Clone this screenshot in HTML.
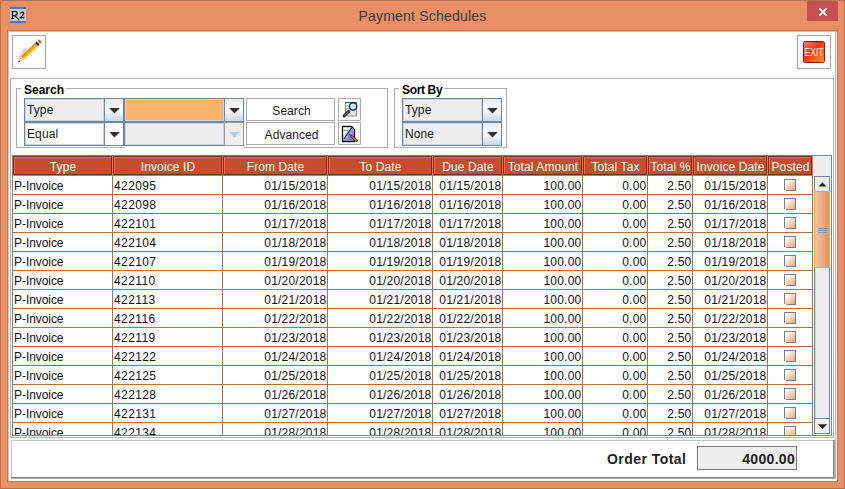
<!DOCTYPE html>
<html><head><meta charset="utf-8"><title>Payment Schedules</title>
<style>
html,body{margin:0;padding:0;}
body{width:845px;height:489px;position:relative;overflow:hidden;background:#e98f66;font-family:"Liberation Sans", sans-serif;}
div{position:absolute;}
svg{display:block;}
.t{white-space:nowrap;}
</style></head><body>
<div style="left:0px;top:0px;width:845px;height:489px;background:#e98f66;"></div><div style="left:0px;top:0px;width:845px;height:1px;background:#b9714f;"></div><div style="left:0px;top:0px;width:1px;height:489px;background:#b9714f;"></div><div style="left:844px;top:0px;width:1px;height:489px;background:#b9714f;"></div><div style="left:0px;top:488px;width:845px;height:1px;background:#b9714f;"></div><svg style="position:absolute;left:10px;top:7px" width="16" height="16" viewBox="0 0 16 16">
<rect x="0" y="0" width="16" height="16" fill="#c9cdd2"/>
<rect x="0" y="0" width="16" height="2" fill="#3b79c9"/>
<rect x="0" y="14" width="16" height="2" fill="#3b79c9"/>
<path d="M2.5 4.5 V11.5 M1.5 4.5 H5.5 Q7.5 4.8 7.3 6.6 Q7 8.4 4.6 8.6 H3 M4.8 8.6 L9.2 13.2" stroke="#151515" stroke-width="1.2" fill="none"/>
<path d="M1.2 11.6 H4" stroke="#151515" stroke-width="1"/>
<path d="M10.3 6.6 Q10.8 4.9 12.4 5 Q14 5.2 13.7 6.8 Q13.3 8.3 10.2 10.6 H14.4" stroke="#151515" stroke-width="1.1" fill="none"/>
</svg><div class="t" style="left:0px;top:8px;width:845px;text-align:center;font-size:14px;line-height:16px;color:#383838;letter-spacing:0.2px;">Payment Schedules</div><div style="left:807px;top:1px;width:31px;height:20px;background:#c75050;"></div><svg style="position:absolute;left:818px;top:7px" width="10" height="10" viewBox="0 0 10 10">
<path d="M1.4 1.3 L8.6 8.7 M8.6 1.3 L1.4 8.7" stroke="#fff" stroke-width="1.9"/></svg><div style="left:7px;top:30px;width:831px;height:452px;background:#c77953;"></div><div style="left:8px;top:31px;width:829px;height:450px;background:#ffffff;"></div><div style="left:8px;top:31px;width:829px;height:1px;background:#b3bec6;"></div><div style="left:8px;top:31px;width:1px;height:450px;background:#c3cbd0;"></div><div style="left:835px;top:31px;width:1px;height:448px;background:#b8b8b8;"></div><div style="left:12px;top:35px;width:34px;height:34px;border:1px solid #a9a9a9;box-sizing:border-box;background:#fff;"></div><svg style="position:absolute;left:13px;top:36px" width="32" height="32" viewBox="0 0 32 32">
<defs><filter id="bl" x="-80%" y="-80%" width="260%" height="260%"><feGaussianBlur stdDeviation="1.5"/></filter></defs>
<path d="M6.5 23.5 L13.5 12.5" stroke="#8c8c8c" stroke-width="3.2" opacity="0.6" filter="url(#bl)"/>
<g transform="translate(5,26.5) rotate(-44)">
<path d="M0 0 L6.5 -2.1 L6.5 2.1 Z" fill="#f3cfae"/>
<path d="M0 0 L2.2 -0.75 L2.2 0.75 Z" fill="#2a2a2a"/>
<rect x="6.5" y="-2.1" width="19.5" height="4.2" fill="#f6a800"/>
<rect x="6.5" y="-2.1" width="19.5" height="1.3" fill="#e88f00"/>
<rect x="6.5" y="0.9" width="19.5" height="1.2" fill="#ffd040"/>
<rect x="26" y="-2.1" width="2" height="4.2" fill="#1e1e1e"/>
<rect x="28" y="-2.1" width="1" height="4.2" fill="#d0d0d0"/>
<rect x="29" y="-2.1" width="2.4" height="4.2" rx="1" fill="#ff5a20"/>
</g></svg><div style="left:797px;top:35px;width:34px;height:34px;border:1px solid #a9a9a9;box-sizing:border-box;background:#fff;"></div><svg style="position:absolute;left:803px;top:41px" width="22" height="22" viewBox="0 0 22 22">
<defs><linearGradient id="eg" x1="0" y1="0" x2="1" y2="1">
<stop offset="0" stop-color="#e87a7a"/><stop offset="0.45" stop-color="#f03a10"/><stop offset="1" stop-color="#ff9a2a"/></linearGradient></defs>
<path d="M1.5 0.5 H20.5 L21.5 1.5 V20.5 L20.5 21.5 H1.5 L0.5 20.5 V1.5 Z" fill="url(#eg)" stroke="#a50f0f" stroke-width="1"/>
<text x="11" y="15" text-anchor="middle" font-family="Liberation Sans" font-size="10" fill="#fff" textLength="19.2" lengthAdjust="spacingAndGlyphs">EXIT</text>
</svg><div style="left:10px;top:78px;width:824px;height:360px;border:1px solid #b4b4b4;box-sizing:border-box;"></div><div style="left:16px;top:88px;width:372px;height:60px;border:1px solid #acacac;box-sizing:border-box;"></div><div style="left:21px;top:86px;width:45px;height:5px;background:#fff;"></div><div class="t" style="left:24px;top:83px;text-align:left;font-size:12px;line-height:14px;font-weight:bold;color:#000;letter-spacing:0px;">Search</div><div style="left:394px;top:88px;width:113px;height:60px;border:1px solid #acacac;box-sizing:border-box;"></div><div style="left:399px;top:86px;width:45px;height:5px;background:#fff;"></div><div class="t" style="left:402px;top:83px;text-align:left;font-size:12px;line-height:14px;font-weight:bold;color:#000;letter-spacing:-0.35px;">Sort By</div><div style="left:124px;top:147px;width:120px;height:1px;background:#fff;"></div><div style="left:24px;top:98px;width:100px;height:24px;background:#72879a;"></div><div style="left:25px;top:99px;width:79px;height:22px;background:#c4d7ea;"></div><div style="left:26px;top:100px;width:77px;height:20px;background:#eeeeee;"></div><div style="left:105px;top:99px;width:18px;height:22px;background:linear-gradient(#e2ebf5,#ffffff 42%,#c9daed);"></div><svg style="position:absolute;left:109px;top:108px" width="11" height="6" viewBox="0 0 11 6"><path d="M0.2 0 H10.8 L5.5 5.6 Z" fill="#333"/></svg><div class="t" style="left:27px;top:102px;text-align:left;font-size:12px;line-height:16px;color:#1a1a1a;letter-spacing:0.1px;">Type</div><div style="left:124px;top:98px;width:120px;height:24px;background:#72879a;"></div><div style="left:125px;top:99px;width:99px;height:22px;background:#c4d7ea;"></div><div style="left:126px;top:100px;width:97px;height:20px;background:#fcb36b;"></div><div style="left:225px;top:99px;width:18px;height:22px;background:linear-gradient(#e2ebf5,#ffffff 42%,#c9daed);"></div><svg style="position:absolute;left:229px;top:108px" width="11" height="6" viewBox="0 0 11 6"><path d="M0.2 0 H10.8 L5.5 5.6 Z" fill="#333"/></svg><div style="left:24px;top:122px;width:100px;height:24px;background:#72879a;"></div><div style="left:25px;top:123px;width:79px;height:22px;background:#c4d7ea;"></div><div style="left:26px;top:124px;width:77px;height:20px;background:#ffffff;"></div><div style="left:105px;top:123px;width:18px;height:22px;background:#ffffff;"></div><svg style="position:absolute;left:109px;top:132px" width="11" height="6" viewBox="0 0 11 6"><path d="M0.2 0 H10.8 L5.5 5.6 Z" fill="#333"/></svg><div class="t" style="left:27px;top:126px;text-align:left;font-size:12px;line-height:16px;color:#1a1a1a;letter-spacing:0.1px;">Equal</div><div style="left:124px;top:122px;width:120px;height:24px;background:#72879a;"></div><div style="left:125px;top:123px;width:99px;height:22px;background:#c4d7ea;"></div><div style="left:126px;top:124px;width:97px;height:20px;background:#eeeeee;"></div><div style="left:224px;top:122px;width:20px;height:24px;background:#9c9c9c;"></div><div style="left:225px;top:123px;width:18px;height:22px;background:#eeeeee;"></div><svg style="position:absolute;left:229px;top:132px" width="11" height="6" viewBox="0 0 11 6"><path d="M0.2 0 H10.8 L5.5 5.6 Z" fill="#b5cbe3"/></svg><div style="left:402px;top:98px;width:100px;height:24px;background:#72879a;"></div><div style="left:403px;top:99px;width:79px;height:22px;background:#c4d7ea;"></div><div style="left:404px;top:100px;width:77px;height:20px;background:#eeeeee;"></div><div style="left:483px;top:99px;width:18px;height:22px;background:linear-gradient(#e2ebf5,#ffffff 42%,#c9daed);"></div><svg style="position:absolute;left:487px;top:108px" width="11" height="6" viewBox="0 0 11 6"><path d="M0.2 0 H10.8 L5.5 5.6 Z" fill="#333"/></svg><div class="t" style="left:405px;top:102px;text-align:left;font-size:12px;line-height:16px;color:#1a1a1a;letter-spacing:0.1px;">Type</div><div style="left:402px;top:122px;width:100px;height:24px;background:#72879a;"></div><div style="left:403px;top:123px;width:79px;height:22px;background:#c4d7ea;"></div><div style="left:404px;top:124px;width:77px;height:20px;background:#eeeeee;"></div><div style="left:483px;top:123px;width:18px;height:22px;background:linear-gradient(#e2ebf5,#ffffff 42%,#c9daed);"></div><svg style="position:absolute;left:487px;top:132px" width="11" height="6" viewBox="0 0 11 6"><path d="M0.2 0 H10.8 L5.5 5.6 Z" fill="#333"/></svg><div class="t" style="left:405px;top:126px;text-align:left;font-size:12px;line-height:16px;color:#1a1a1a;letter-spacing:0.1px;">None</div><div style="left:246px;top:98px;width:89px;height:23px;border:1px solid #ababab;box-sizing:border-box;background:#fff;"></div><div class="t" style="left:247px;top:103px;width:89px;text-align:center;font-size:12px;line-height:16px;color:#1a1a1a;letter-spacing:0.05px;">Search</div><div style="left:246px;top:122px;width:89px;height:23px;border:1px solid #ababab;box-sizing:border-box;background:#fff;"></div><div class="t" style="left:247px;top:127px;width:89px;text-align:center;font-size:12px;line-height:16px;color:#1a1a1a;letter-spacing:0.05px;">Advanced</div><div style="left:338px;top:98px;width:23px;height:23px;border:1px solid #ababab;box-sizing:border-box;background:#fff;"></div><div style="left:338px;top:122px;width:23px;height:23px;border:1px solid #ababab;box-sizing:border-box;background:#fff;"></div><svg style="position:absolute;left:339px;top:99px" width="21" height="21" viewBox="0 0 21 21">
<rect x="6.5" y="3.5" width="11" height="13.5" fill="#e4e4e4" stroke="#8c8c8c" stroke-width="1"/>
<rect x="6" y="3" width="12" height="1.2" fill="#555"/>
<rect x="7" y="4.2" width="3.5" height="9" fill="#fafafa"/>
<rect x="7.5" y="6" width="2" height="1" fill="#999"/><rect x="7.5" y="9" width="2" height="1" fill="#999"/>
<path d="M5 17 L9.6 12.4" stroke="#2a2a2a" stroke-width="3" stroke-linecap="round"/>
<path d="M5.6 16.2 L9.2 12.6" stroke="#9a9a9a" stroke-width="0.8" stroke-linecap="round"/>
<circle cx="14.05" cy="7.5" r="3.7" fill="#c4f6fa" stroke="#262626" stroke-width="1.4"/>
</svg><svg style="position:absolute;left:339px;top:123px" width="21" height="21" viewBox="0 0 21 21">
<defs><linearGradient id="ag" x1="0" y1="0" x2="0.7" y2="1"><stop offset="0.35" stop-color="#ffffff"/><stop offset="1" stop-color="#5c5cf2"/></linearGradient></defs>
<path d="M3.5 3.5 H12.5 L15.5 6.5 V18.5 H3.5 Z" fill="url(#ag)" stroke="#111" stroke-width="1.3"/>
<path d="M12 4.2 L15 7 V18 L10 18 L8 15 Z" fill="#8282f2" opacity="0.75"/>
<path d="M4.5 7 Q7 7.6 9.5 8" stroke="#a0a0f6" stroke-width="1.3" fill="none"/>
<path d="M5 16 L12.6 4.6" stroke="#111" stroke-width="1.1"/>
<path d="M9.5 11 L12.5 13.5" stroke="#111" stroke-width="1"/>
<path d="M12.3 13.3 L17.6 17.6" stroke="#3a2010" stroke-width="2.6" stroke-linecap="round"/>
<path d="M12.5 13.3 L17.4 17.4" stroke="#d9773a" stroke-width="1.3" stroke-linecap="round"/>
</svg><div style="left:12px;top:155px;width:820px;height:281px;background:#72879a;"></div><div style="left:13px;top:156px;width:818px;height:279px;background:#ffffff;"></div><div style="left:813px;top:156px;width:18px;height:20px;background:#eeeeee;"></div><div style="left:13px;top:156px;width:100px;height:20px;background:#ff6b3c;"></div><div style="left:13px;top:156px;width:99px;height:19px;background:#7e2e17;"></div><div style="left:14px;top:157px;width:98px;height:18px;background:#7e2e17;"></div><div style="left:14px;top:157px;width:97px;height:17px;background:#ff6b3c;"></div><div style="left:15px;top:158px;width:96px;height:16px;background:#c54e2d;"></div><div class="t" style="left:13px;top:159px;width:100px;text-align:center;font-size:12px;line-height:16px;color:#fff;letter-spacing:0.1px;">Type</div><div style="left:113px;top:156px;width:110px;height:20px;background:#ff6b3c;"></div><div style="left:113px;top:156px;width:109px;height:19px;background:#7e2e17;"></div><div style="left:114px;top:157px;width:108px;height:18px;background:#7e2e17;"></div><div style="left:114px;top:157px;width:107px;height:17px;background:#ff6b3c;"></div><div style="left:115px;top:158px;width:106px;height:16px;background:#c54e2d;"></div><div class="t" style="left:113px;top:159px;width:110px;text-align:center;font-size:12px;line-height:16px;color:#fff;letter-spacing:0.1px;">Invoice ID</div><div style="left:223px;top:156px;width:105px;height:20px;background:#ff6b3c;"></div><div style="left:223px;top:156px;width:104px;height:19px;background:#7e2e17;"></div><div style="left:224px;top:157px;width:103px;height:18px;background:#7e2e17;"></div><div style="left:224px;top:157px;width:102px;height:17px;background:#ff6b3c;"></div><div style="left:225px;top:158px;width:101px;height:16px;background:#c54e2d;"></div><div class="t" style="left:223px;top:159px;width:105px;text-align:center;font-size:12px;line-height:16px;color:#fff;letter-spacing:0.1px;">From Date</div><div style="left:328px;top:156px;width:105px;height:20px;background:#ff6b3c;"></div><div style="left:328px;top:156px;width:104px;height:19px;background:#7e2e17;"></div><div style="left:329px;top:157px;width:103px;height:18px;background:#7e2e17;"></div><div style="left:329px;top:157px;width:102px;height:17px;background:#ff6b3c;"></div><div style="left:330px;top:158px;width:101px;height:16px;background:#c54e2d;"></div><div class="t" style="left:328px;top:159px;width:105px;text-align:center;font-size:12px;line-height:16px;color:#fff;letter-spacing:0.1px;">To Date</div><div style="left:433px;top:156px;width:70px;height:20px;background:#ff6b3c;"></div><div style="left:433px;top:156px;width:69px;height:19px;background:#7e2e17;"></div><div style="left:434px;top:157px;width:68px;height:18px;background:#7e2e17;"></div><div style="left:434px;top:157px;width:67px;height:17px;background:#ff6b3c;"></div><div style="left:435px;top:158px;width:66px;height:16px;background:#c54e2d;"></div><div class="t" style="left:433px;top:159px;width:70px;text-align:center;font-size:12px;line-height:16px;color:#fff;letter-spacing:0.1px;">Due Date</div><div style="left:503px;top:156px;width:80px;height:20px;background:#ff6b3c;"></div><div style="left:503px;top:156px;width:79px;height:19px;background:#7e2e17;"></div><div style="left:504px;top:157px;width:78px;height:18px;background:#7e2e17;"></div><div style="left:504px;top:157px;width:77px;height:17px;background:#ff6b3c;"></div><div style="left:505px;top:158px;width:76px;height:16px;background:#c54e2d;"></div><div class="t" style="left:503px;top:159px;width:80px;text-align:center;font-size:12px;line-height:16px;color:#fff;letter-spacing:0.1px;">Total Amount</div><div style="left:583px;top:156px;width:65px;height:20px;background:#ff6b3c;"></div><div style="left:583px;top:156px;width:64px;height:19px;background:#7e2e17;"></div><div style="left:584px;top:157px;width:63px;height:18px;background:#7e2e17;"></div><div style="left:584px;top:157px;width:62px;height:17px;background:#ff6b3c;"></div><div style="left:585px;top:158px;width:61px;height:16px;background:#c54e2d;"></div><div class="t" style="left:583px;top:159px;width:65px;text-align:center;font-size:12px;line-height:16px;color:#fff;letter-spacing:0.1px;">Total Tax</div><div style="left:648px;top:156px;width:45px;height:20px;background:#ff6b3c;"></div><div style="left:648px;top:156px;width:44px;height:19px;background:#7e2e17;"></div><div style="left:649px;top:157px;width:43px;height:18px;background:#7e2e17;"></div><div style="left:649px;top:157px;width:42px;height:17px;background:#ff6b3c;"></div><div style="left:650px;top:158px;width:41px;height:16px;background:#c54e2d;"></div><div class="t" style="left:648px;top:159px;width:45px;text-align:center;font-size:12px;line-height:16px;color:#fff;letter-spacing:0.1px;">Total %</div><div style="left:693px;top:156px;width:75px;height:20px;background:#ff6b3c;"></div><div style="left:693px;top:156px;width:74px;height:19px;background:#7e2e17;"></div><div style="left:694px;top:157px;width:73px;height:18px;background:#7e2e17;"></div><div style="left:694px;top:157px;width:72px;height:17px;background:#ff6b3c;"></div><div style="left:695px;top:158px;width:71px;height:16px;background:#c54e2d;"></div><div class="t" style="left:693px;top:159px;width:75px;text-align:center;font-size:12px;line-height:16px;color:#fff;letter-spacing:0.1px;">Invoice Date</div><div style="left:768px;top:156px;width:45px;height:20px;background:#ff6b3c;"></div><div style="left:768px;top:156px;width:44px;height:19px;background:#7e2e17;"></div><div style="left:769px;top:157px;width:43px;height:18px;background:#7e2e17;"></div><div style="left:769px;top:157px;width:42px;height:17px;background:#ff6b3c;"></div><div style="left:770px;top:158px;width:41px;height:16px;background:#c54e2d;"></div><div class="t" style="left:768px;top:159px;width:45px;text-align:center;font-size:12px;line-height:16px;color:#fff;letter-spacing:0.1px;">Posted</div><div style="left:13px;top:176px;width:800px;height:259px;overflow:hidden;"><div style="left:99px;top:0px;width:1px;height:19px;background:#b8703a;"></div><div class="t" style="left:1px;top:2px;width:98px;font-size:12px;line-height:16px;color:#111;letter-spacing:-0.06px;">P-Invoice</div><div style="left:209px;top:0px;width:1px;height:19px;background:#b8703a;"></div><div class="t" style="left:101px;top:2px;width:108px;font-size:12px;line-height:16px;color:#111;letter-spacing:0.4px;">422095</div><div style="left:314px;top:0px;width:1px;height:19px;background:#b8703a;"></div><div class="t" style="left:210px;top:2px;width:103.4px;text-align:right;font-size:12px;line-height:16px;color:#111;letter-spacing:0.2px;">01/15/2018</div><div style="left:419px;top:0px;width:1px;height:19px;background:#b8703a;"></div><div class="t" style="left:315px;top:2px;width:103.4px;text-align:right;font-size:12px;line-height:16px;color:#111;letter-spacing:0.2px;">01/15/2018</div><div style="left:489px;top:0px;width:1px;height:19px;background:#b8703a;"></div><div class="t" style="left:420px;top:2px;width:68.4px;text-align:right;font-size:12px;line-height:16px;color:#111;letter-spacing:0.2px;">01/15/2018</div><div style="left:569px;top:0px;width:1px;height:19px;background:#b8703a;"></div><div class="t" style="left:490px;top:2px;width:78.4px;text-align:right;font-size:12px;line-height:16px;color:#111;letter-spacing:0.2px;">100.00</div><div style="left:634px;top:0px;width:1px;height:19px;background:#b8703a;"></div><div class="t" style="left:570px;top:2px;width:63.4px;text-align:right;font-size:12px;line-height:16px;color:#111;letter-spacing:0.2px;">0.00</div><div style="left:679px;top:0px;width:1px;height:19px;background:#b8703a;"></div><div class="t" style="left:635px;top:2px;width:43.4px;text-align:right;font-size:12px;line-height:16px;color:#111;letter-spacing:0.2px;">2.50</div><div style="left:754px;top:0px;width:1px;height:19px;background:#b8703a;"></div><div class="t" style="left:680px;top:2px;width:73.4px;text-align:right;font-size:12px;line-height:16px;color:#111;letter-spacing:0.2px;">01/15/2018</div><div style="left:799px;top:0px;width:1px;height:19px;background:#b8703a;"></div><div style="left:771px;top:3px;width:12px;height:12px;"><svg width="12" height="12" viewBox="0 0 12 12" shape-rendering="crispEdges"><defs><linearGradient id="cg0" x1="0" y1="0" x2="1" y2="1"><stop offset="0.15" stop-color="#ffffff"/><stop offset="0.95" stop-color="#f0a672"/></linearGradient></defs><rect x="1" y="1" width="10" height="10" fill="url(#cg0)"/><rect x="0" y="0" width="12" height="1" fill="#6f8296"/><rect x="0" y="0" width="1" height="11" fill="#6f8296"/><rect x="11" y="1" width="1" height="11" fill="#6f8296"/><rect x="2" y="11" width="10" height="1" fill="#6f8296"/></svg></div><div style="left:0px;top:18px;width:800px;height:1px;background:#b8703a;"></div><div style="left:99px;top:19px;width:1px;height:19px;background:#b8703a;"></div><div class="t" style="left:1px;top:21px;width:98px;font-size:12px;line-height:16px;color:#111;letter-spacing:-0.06px;">P-Invoice</div><div style="left:209px;top:19px;width:1px;height:19px;background:#b8703a;"></div><div class="t" style="left:101px;top:21px;width:108px;font-size:12px;line-height:16px;color:#111;letter-spacing:0.4px;">422098</div><div style="left:314px;top:19px;width:1px;height:19px;background:#b8703a;"></div><div class="t" style="left:210px;top:21px;width:103.4px;text-align:right;font-size:12px;line-height:16px;color:#111;letter-spacing:0.2px;">01/16/2018</div><div style="left:419px;top:19px;width:1px;height:19px;background:#b8703a;"></div><div class="t" style="left:315px;top:21px;width:103.4px;text-align:right;font-size:12px;line-height:16px;color:#111;letter-spacing:0.2px;">01/16/2018</div><div style="left:489px;top:19px;width:1px;height:19px;background:#b8703a;"></div><div class="t" style="left:420px;top:21px;width:68.4px;text-align:right;font-size:12px;line-height:16px;color:#111;letter-spacing:0.2px;">01/16/2018</div><div style="left:569px;top:19px;width:1px;height:19px;background:#b8703a;"></div><div class="t" style="left:490px;top:21px;width:78.4px;text-align:right;font-size:12px;line-height:16px;color:#111;letter-spacing:0.2px;">100.00</div><div style="left:634px;top:19px;width:1px;height:19px;background:#b8703a;"></div><div class="t" style="left:570px;top:21px;width:63.4px;text-align:right;font-size:12px;line-height:16px;color:#111;letter-spacing:0.2px;">0.00</div><div style="left:679px;top:19px;width:1px;height:19px;background:#b8703a;"></div><div class="t" style="left:635px;top:21px;width:43.4px;text-align:right;font-size:12px;line-height:16px;color:#111;letter-spacing:0.2px;">2.50</div><div style="left:754px;top:19px;width:1px;height:19px;background:#b8703a;"></div><div class="t" style="left:680px;top:21px;width:73.4px;text-align:right;font-size:12px;line-height:16px;color:#111;letter-spacing:0.2px;">01/16/2018</div><div style="left:799px;top:19px;width:1px;height:19px;background:#b8703a;"></div><div style="left:771px;top:22px;width:12px;height:12px;"><svg width="12" height="12" viewBox="0 0 12 12" shape-rendering="crispEdges"><defs><linearGradient id="cg1" x1="0" y1="0" x2="1" y2="1"><stop offset="0.15" stop-color="#ffffff"/><stop offset="0.95" stop-color="#f0a672"/></linearGradient></defs><rect x="1" y="1" width="10" height="10" fill="url(#cg1)"/><rect x="0" y="0" width="12" height="1" fill="#6f8296"/><rect x="0" y="0" width="1" height="11" fill="#6f8296"/><rect x="11" y="1" width="1" height="11" fill="#6f8296"/><rect x="2" y="11" width="10" height="1" fill="#6f8296"/></svg></div><div style="left:0px;top:37px;width:800px;height:1px;background:#b8703a;"></div><div style="left:99px;top:38px;width:1px;height:19px;background:#b8703a;"></div><div class="t" style="left:1px;top:40px;width:98px;font-size:12px;line-height:16px;color:#111;letter-spacing:-0.06px;">P-Invoice</div><div style="left:209px;top:38px;width:1px;height:19px;background:#b8703a;"></div><div class="t" style="left:101px;top:40px;width:108px;font-size:12px;line-height:16px;color:#111;letter-spacing:0.4px;">422101</div><div style="left:314px;top:38px;width:1px;height:19px;background:#b8703a;"></div><div class="t" style="left:210px;top:40px;width:103.4px;text-align:right;font-size:12px;line-height:16px;color:#111;letter-spacing:0.2px;">01/17/2018</div><div style="left:419px;top:38px;width:1px;height:19px;background:#b8703a;"></div><div class="t" style="left:315px;top:40px;width:103.4px;text-align:right;font-size:12px;line-height:16px;color:#111;letter-spacing:0.2px;">01/17/2018</div><div style="left:489px;top:38px;width:1px;height:19px;background:#b8703a;"></div><div class="t" style="left:420px;top:40px;width:68.4px;text-align:right;font-size:12px;line-height:16px;color:#111;letter-spacing:0.2px;">01/17/2018</div><div style="left:569px;top:38px;width:1px;height:19px;background:#b8703a;"></div><div class="t" style="left:490px;top:40px;width:78.4px;text-align:right;font-size:12px;line-height:16px;color:#111;letter-spacing:0.2px;">100.00</div><div style="left:634px;top:38px;width:1px;height:19px;background:#b8703a;"></div><div class="t" style="left:570px;top:40px;width:63.4px;text-align:right;font-size:12px;line-height:16px;color:#111;letter-spacing:0.2px;">0.00</div><div style="left:679px;top:38px;width:1px;height:19px;background:#b8703a;"></div><div class="t" style="left:635px;top:40px;width:43.4px;text-align:right;font-size:12px;line-height:16px;color:#111;letter-spacing:0.2px;">2.50</div><div style="left:754px;top:38px;width:1px;height:19px;background:#b8703a;"></div><div class="t" style="left:680px;top:40px;width:73.4px;text-align:right;font-size:12px;line-height:16px;color:#111;letter-spacing:0.2px;">01/17/2018</div><div style="left:799px;top:38px;width:1px;height:19px;background:#b8703a;"></div><div style="left:771px;top:41px;width:12px;height:12px;"><svg width="12" height="12" viewBox="0 0 12 12" shape-rendering="crispEdges"><defs><linearGradient id="cg2" x1="0" y1="0" x2="1" y2="1"><stop offset="0.15" stop-color="#ffffff"/><stop offset="0.95" stop-color="#f0a672"/></linearGradient></defs><rect x="1" y="1" width="10" height="10" fill="url(#cg2)"/><rect x="0" y="0" width="12" height="1" fill="#6f8296"/><rect x="0" y="0" width="1" height="11" fill="#6f8296"/><rect x="11" y="1" width="1" height="11" fill="#6f8296"/><rect x="2" y="11" width="10" height="1" fill="#6f8296"/></svg></div><div style="left:0px;top:56px;width:800px;height:1px;background:#b8703a;"></div><div style="left:99px;top:57px;width:1px;height:19px;background:#b8703a;"></div><div class="t" style="left:1px;top:59px;width:98px;font-size:12px;line-height:16px;color:#111;letter-spacing:-0.06px;">P-Invoice</div><div style="left:209px;top:57px;width:1px;height:19px;background:#b8703a;"></div><div class="t" style="left:101px;top:59px;width:108px;font-size:12px;line-height:16px;color:#111;letter-spacing:0.4px;">422104</div><div style="left:314px;top:57px;width:1px;height:19px;background:#b8703a;"></div><div class="t" style="left:210px;top:59px;width:103.4px;text-align:right;font-size:12px;line-height:16px;color:#111;letter-spacing:0.2px;">01/18/2018</div><div style="left:419px;top:57px;width:1px;height:19px;background:#b8703a;"></div><div class="t" style="left:315px;top:59px;width:103.4px;text-align:right;font-size:12px;line-height:16px;color:#111;letter-spacing:0.2px;">01/18/2018</div><div style="left:489px;top:57px;width:1px;height:19px;background:#b8703a;"></div><div class="t" style="left:420px;top:59px;width:68.4px;text-align:right;font-size:12px;line-height:16px;color:#111;letter-spacing:0.2px;">01/18/2018</div><div style="left:569px;top:57px;width:1px;height:19px;background:#b8703a;"></div><div class="t" style="left:490px;top:59px;width:78.4px;text-align:right;font-size:12px;line-height:16px;color:#111;letter-spacing:0.2px;">100.00</div><div style="left:634px;top:57px;width:1px;height:19px;background:#b8703a;"></div><div class="t" style="left:570px;top:59px;width:63.4px;text-align:right;font-size:12px;line-height:16px;color:#111;letter-spacing:0.2px;">0.00</div><div style="left:679px;top:57px;width:1px;height:19px;background:#b8703a;"></div><div class="t" style="left:635px;top:59px;width:43.4px;text-align:right;font-size:12px;line-height:16px;color:#111;letter-spacing:0.2px;">2.50</div><div style="left:754px;top:57px;width:1px;height:19px;background:#b8703a;"></div><div class="t" style="left:680px;top:59px;width:73.4px;text-align:right;font-size:12px;line-height:16px;color:#111;letter-spacing:0.2px;">01/18/2018</div><div style="left:799px;top:57px;width:1px;height:19px;background:#b8703a;"></div><div style="left:771px;top:60px;width:12px;height:12px;"><svg width="12" height="12" viewBox="0 0 12 12" shape-rendering="crispEdges"><defs><linearGradient id="cg3" x1="0" y1="0" x2="1" y2="1"><stop offset="0.15" stop-color="#ffffff"/><stop offset="0.95" stop-color="#f0a672"/></linearGradient></defs><rect x="1" y="1" width="10" height="10" fill="url(#cg3)"/><rect x="0" y="0" width="12" height="1" fill="#6f8296"/><rect x="0" y="0" width="1" height="11" fill="#6f8296"/><rect x="11" y="1" width="1" height="11" fill="#6f8296"/><rect x="2" y="11" width="10" height="1" fill="#6f8296"/></svg></div><div style="left:0px;top:75px;width:800px;height:1px;background:#b8703a;"></div><div style="left:99px;top:76px;width:1px;height:19px;background:#b8703a;"></div><div class="t" style="left:1px;top:78px;width:98px;font-size:12px;line-height:16px;color:#111;letter-spacing:-0.06px;">P-Invoice</div><div style="left:209px;top:76px;width:1px;height:19px;background:#b8703a;"></div><div class="t" style="left:101px;top:78px;width:108px;font-size:12px;line-height:16px;color:#111;letter-spacing:0.4px;">422107</div><div style="left:314px;top:76px;width:1px;height:19px;background:#b8703a;"></div><div class="t" style="left:210px;top:78px;width:103.4px;text-align:right;font-size:12px;line-height:16px;color:#111;letter-spacing:0.2px;">01/19/2018</div><div style="left:419px;top:76px;width:1px;height:19px;background:#b8703a;"></div><div class="t" style="left:315px;top:78px;width:103.4px;text-align:right;font-size:12px;line-height:16px;color:#111;letter-spacing:0.2px;">01/19/2018</div><div style="left:489px;top:76px;width:1px;height:19px;background:#b8703a;"></div><div class="t" style="left:420px;top:78px;width:68.4px;text-align:right;font-size:12px;line-height:16px;color:#111;letter-spacing:0.2px;">01/19/2018</div><div style="left:569px;top:76px;width:1px;height:19px;background:#b8703a;"></div><div class="t" style="left:490px;top:78px;width:78.4px;text-align:right;font-size:12px;line-height:16px;color:#111;letter-spacing:0.2px;">100.00</div><div style="left:634px;top:76px;width:1px;height:19px;background:#b8703a;"></div><div class="t" style="left:570px;top:78px;width:63.4px;text-align:right;font-size:12px;line-height:16px;color:#111;letter-spacing:0.2px;">0.00</div><div style="left:679px;top:76px;width:1px;height:19px;background:#b8703a;"></div><div class="t" style="left:635px;top:78px;width:43.4px;text-align:right;font-size:12px;line-height:16px;color:#111;letter-spacing:0.2px;">2.50</div><div style="left:754px;top:76px;width:1px;height:19px;background:#b8703a;"></div><div class="t" style="left:680px;top:78px;width:73.4px;text-align:right;font-size:12px;line-height:16px;color:#111;letter-spacing:0.2px;">01/19/2018</div><div style="left:799px;top:76px;width:1px;height:19px;background:#b8703a;"></div><div style="left:771px;top:79px;width:12px;height:12px;"><svg width="12" height="12" viewBox="0 0 12 12" shape-rendering="crispEdges"><defs><linearGradient id="cg4" x1="0" y1="0" x2="1" y2="1"><stop offset="0.15" stop-color="#ffffff"/><stop offset="0.95" stop-color="#f0a672"/></linearGradient></defs><rect x="1" y="1" width="10" height="10" fill="url(#cg4)"/><rect x="0" y="0" width="12" height="1" fill="#6f8296"/><rect x="0" y="0" width="1" height="11" fill="#6f8296"/><rect x="11" y="1" width="1" height="11" fill="#6f8296"/><rect x="2" y="11" width="10" height="1" fill="#6f8296"/></svg></div><div style="left:0px;top:94px;width:800px;height:1px;background:#b8703a;"></div><div style="left:99px;top:95px;width:1px;height:19px;background:#b8703a;"></div><div class="t" style="left:1px;top:97px;width:98px;font-size:12px;line-height:16px;color:#111;letter-spacing:-0.06px;">P-Invoice</div><div style="left:209px;top:95px;width:1px;height:19px;background:#b8703a;"></div><div class="t" style="left:101px;top:97px;width:108px;font-size:12px;line-height:16px;color:#111;letter-spacing:0.4px;">422110</div><div style="left:314px;top:95px;width:1px;height:19px;background:#b8703a;"></div><div class="t" style="left:210px;top:97px;width:103.4px;text-align:right;font-size:12px;line-height:16px;color:#111;letter-spacing:0.2px;">01/20/2018</div><div style="left:419px;top:95px;width:1px;height:19px;background:#b8703a;"></div><div class="t" style="left:315px;top:97px;width:103.4px;text-align:right;font-size:12px;line-height:16px;color:#111;letter-spacing:0.2px;">01/20/2018</div><div style="left:489px;top:95px;width:1px;height:19px;background:#b8703a;"></div><div class="t" style="left:420px;top:97px;width:68.4px;text-align:right;font-size:12px;line-height:16px;color:#111;letter-spacing:0.2px;">01/20/2018</div><div style="left:569px;top:95px;width:1px;height:19px;background:#b8703a;"></div><div class="t" style="left:490px;top:97px;width:78.4px;text-align:right;font-size:12px;line-height:16px;color:#111;letter-spacing:0.2px;">100.00</div><div style="left:634px;top:95px;width:1px;height:19px;background:#b8703a;"></div><div class="t" style="left:570px;top:97px;width:63.4px;text-align:right;font-size:12px;line-height:16px;color:#111;letter-spacing:0.2px;">0.00</div><div style="left:679px;top:95px;width:1px;height:19px;background:#b8703a;"></div><div class="t" style="left:635px;top:97px;width:43.4px;text-align:right;font-size:12px;line-height:16px;color:#111;letter-spacing:0.2px;">2.50</div><div style="left:754px;top:95px;width:1px;height:19px;background:#b8703a;"></div><div class="t" style="left:680px;top:97px;width:73.4px;text-align:right;font-size:12px;line-height:16px;color:#111;letter-spacing:0.2px;">01/20/2018</div><div style="left:799px;top:95px;width:1px;height:19px;background:#b8703a;"></div><div style="left:771px;top:98px;width:12px;height:12px;"><svg width="12" height="12" viewBox="0 0 12 12" shape-rendering="crispEdges"><defs><linearGradient id="cg5" x1="0" y1="0" x2="1" y2="1"><stop offset="0.15" stop-color="#ffffff"/><stop offset="0.95" stop-color="#f0a672"/></linearGradient></defs><rect x="1" y="1" width="10" height="10" fill="url(#cg5)"/><rect x="0" y="0" width="12" height="1" fill="#6f8296"/><rect x="0" y="0" width="1" height="11" fill="#6f8296"/><rect x="11" y="1" width="1" height="11" fill="#6f8296"/><rect x="2" y="11" width="10" height="1" fill="#6f8296"/></svg></div><div style="left:0px;top:113px;width:800px;height:1px;background:#b8703a;"></div><div style="left:99px;top:114px;width:1px;height:19px;background:#b8703a;"></div><div class="t" style="left:1px;top:116px;width:98px;font-size:12px;line-height:16px;color:#111;letter-spacing:-0.06px;">P-Invoice</div><div style="left:209px;top:114px;width:1px;height:19px;background:#b8703a;"></div><div class="t" style="left:101px;top:116px;width:108px;font-size:12px;line-height:16px;color:#111;letter-spacing:0.4px;">422113</div><div style="left:314px;top:114px;width:1px;height:19px;background:#b8703a;"></div><div class="t" style="left:210px;top:116px;width:103.4px;text-align:right;font-size:12px;line-height:16px;color:#111;letter-spacing:0.2px;">01/21/2018</div><div style="left:419px;top:114px;width:1px;height:19px;background:#b8703a;"></div><div class="t" style="left:315px;top:116px;width:103.4px;text-align:right;font-size:12px;line-height:16px;color:#111;letter-spacing:0.2px;">01/21/2018</div><div style="left:489px;top:114px;width:1px;height:19px;background:#b8703a;"></div><div class="t" style="left:420px;top:116px;width:68.4px;text-align:right;font-size:12px;line-height:16px;color:#111;letter-spacing:0.2px;">01/21/2018</div><div style="left:569px;top:114px;width:1px;height:19px;background:#b8703a;"></div><div class="t" style="left:490px;top:116px;width:78.4px;text-align:right;font-size:12px;line-height:16px;color:#111;letter-spacing:0.2px;">100.00</div><div style="left:634px;top:114px;width:1px;height:19px;background:#b8703a;"></div><div class="t" style="left:570px;top:116px;width:63.4px;text-align:right;font-size:12px;line-height:16px;color:#111;letter-spacing:0.2px;">0.00</div><div style="left:679px;top:114px;width:1px;height:19px;background:#b8703a;"></div><div class="t" style="left:635px;top:116px;width:43.4px;text-align:right;font-size:12px;line-height:16px;color:#111;letter-spacing:0.2px;">2.50</div><div style="left:754px;top:114px;width:1px;height:19px;background:#b8703a;"></div><div class="t" style="left:680px;top:116px;width:73.4px;text-align:right;font-size:12px;line-height:16px;color:#111;letter-spacing:0.2px;">01/21/2018</div><div style="left:799px;top:114px;width:1px;height:19px;background:#b8703a;"></div><div style="left:771px;top:117px;width:12px;height:12px;"><svg width="12" height="12" viewBox="0 0 12 12" shape-rendering="crispEdges"><defs><linearGradient id="cg6" x1="0" y1="0" x2="1" y2="1"><stop offset="0.15" stop-color="#ffffff"/><stop offset="0.95" stop-color="#f0a672"/></linearGradient></defs><rect x="1" y="1" width="10" height="10" fill="url(#cg6)"/><rect x="0" y="0" width="12" height="1" fill="#6f8296"/><rect x="0" y="0" width="1" height="11" fill="#6f8296"/><rect x="11" y="1" width="1" height="11" fill="#6f8296"/><rect x="2" y="11" width="10" height="1" fill="#6f8296"/></svg></div><div style="left:0px;top:132px;width:800px;height:1px;background:#b8703a;"></div><div style="left:99px;top:133px;width:1px;height:19px;background:#b8703a;"></div><div class="t" style="left:1px;top:135px;width:98px;font-size:12px;line-height:16px;color:#111;letter-spacing:-0.06px;">P-Invoice</div><div style="left:209px;top:133px;width:1px;height:19px;background:#b8703a;"></div><div class="t" style="left:101px;top:135px;width:108px;font-size:12px;line-height:16px;color:#111;letter-spacing:0.4px;">422116</div><div style="left:314px;top:133px;width:1px;height:19px;background:#b8703a;"></div><div class="t" style="left:210px;top:135px;width:103.4px;text-align:right;font-size:12px;line-height:16px;color:#111;letter-spacing:0.2px;">01/22/2018</div><div style="left:419px;top:133px;width:1px;height:19px;background:#b8703a;"></div><div class="t" style="left:315px;top:135px;width:103.4px;text-align:right;font-size:12px;line-height:16px;color:#111;letter-spacing:0.2px;">01/22/2018</div><div style="left:489px;top:133px;width:1px;height:19px;background:#b8703a;"></div><div class="t" style="left:420px;top:135px;width:68.4px;text-align:right;font-size:12px;line-height:16px;color:#111;letter-spacing:0.2px;">01/22/2018</div><div style="left:569px;top:133px;width:1px;height:19px;background:#b8703a;"></div><div class="t" style="left:490px;top:135px;width:78.4px;text-align:right;font-size:12px;line-height:16px;color:#111;letter-spacing:0.2px;">100.00</div><div style="left:634px;top:133px;width:1px;height:19px;background:#b8703a;"></div><div class="t" style="left:570px;top:135px;width:63.4px;text-align:right;font-size:12px;line-height:16px;color:#111;letter-spacing:0.2px;">0.00</div><div style="left:679px;top:133px;width:1px;height:19px;background:#b8703a;"></div><div class="t" style="left:635px;top:135px;width:43.4px;text-align:right;font-size:12px;line-height:16px;color:#111;letter-spacing:0.2px;">2.50</div><div style="left:754px;top:133px;width:1px;height:19px;background:#b8703a;"></div><div class="t" style="left:680px;top:135px;width:73.4px;text-align:right;font-size:12px;line-height:16px;color:#111;letter-spacing:0.2px;">01/22/2018</div><div style="left:799px;top:133px;width:1px;height:19px;background:#b8703a;"></div><div style="left:771px;top:136px;width:12px;height:12px;"><svg width="12" height="12" viewBox="0 0 12 12" shape-rendering="crispEdges"><defs><linearGradient id="cg7" x1="0" y1="0" x2="1" y2="1"><stop offset="0.15" stop-color="#ffffff"/><stop offset="0.95" stop-color="#f0a672"/></linearGradient></defs><rect x="1" y="1" width="10" height="10" fill="url(#cg7)"/><rect x="0" y="0" width="12" height="1" fill="#6f8296"/><rect x="0" y="0" width="1" height="11" fill="#6f8296"/><rect x="11" y="1" width="1" height="11" fill="#6f8296"/><rect x="2" y="11" width="10" height="1" fill="#6f8296"/></svg></div><div style="left:0px;top:151px;width:800px;height:1px;background:#b8703a;"></div><div style="left:99px;top:152px;width:1px;height:19px;background:#b8703a;"></div><div class="t" style="left:1px;top:154px;width:98px;font-size:12px;line-height:16px;color:#111;letter-spacing:-0.06px;">P-Invoice</div><div style="left:209px;top:152px;width:1px;height:19px;background:#b8703a;"></div><div class="t" style="left:101px;top:154px;width:108px;font-size:12px;line-height:16px;color:#111;letter-spacing:0.4px;">422119</div><div style="left:314px;top:152px;width:1px;height:19px;background:#b8703a;"></div><div class="t" style="left:210px;top:154px;width:103.4px;text-align:right;font-size:12px;line-height:16px;color:#111;letter-spacing:0.2px;">01/23/2018</div><div style="left:419px;top:152px;width:1px;height:19px;background:#b8703a;"></div><div class="t" style="left:315px;top:154px;width:103.4px;text-align:right;font-size:12px;line-height:16px;color:#111;letter-spacing:0.2px;">01/23/2018</div><div style="left:489px;top:152px;width:1px;height:19px;background:#b8703a;"></div><div class="t" style="left:420px;top:154px;width:68.4px;text-align:right;font-size:12px;line-height:16px;color:#111;letter-spacing:0.2px;">01/23/2018</div><div style="left:569px;top:152px;width:1px;height:19px;background:#b8703a;"></div><div class="t" style="left:490px;top:154px;width:78.4px;text-align:right;font-size:12px;line-height:16px;color:#111;letter-spacing:0.2px;">100.00</div><div style="left:634px;top:152px;width:1px;height:19px;background:#b8703a;"></div><div class="t" style="left:570px;top:154px;width:63.4px;text-align:right;font-size:12px;line-height:16px;color:#111;letter-spacing:0.2px;">0.00</div><div style="left:679px;top:152px;width:1px;height:19px;background:#b8703a;"></div><div class="t" style="left:635px;top:154px;width:43.4px;text-align:right;font-size:12px;line-height:16px;color:#111;letter-spacing:0.2px;">2.50</div><div style="left:754px;top:152px;width:1px;height:19px;background:#b8703a;"></div><div class="t" style="left:680px;top:154px;width:73.4px;text-align:right;font-size:12px;line-height:16px;color:#111;letter-spacing:0.2px;">01/23/2018</div><div style="left:799px;top:152px;width:1px;height:19px;background:#b8703a;"></div><div style="left:771px;top:155px;width:12px;height:12px;"><svg width="12" height="12" viewBox="0 0 12 12" shape-rendering="crispEdges"><defs><linearGradient id="cg8" x1="0" y1="0" x2="1" y2="1"><stop offset="0.15" stop-color="#ffffff"/><stop offset="0.95" stop-color="#f0a672"/></linearGradient></defs><rect x="1" y="1" width="10" height="10" fill="url(#cg8)"/><rect x="0" y="0" width="12" height="1" fill="#6f8296"/><rect x="0" y="0" width="1" height="11" fill="#6f8296"/><rect x="11" y="1" width="1" height="11" fill="#6f8296"/><rect x="2" y="11" width="10" height="1" fill="#6f8296"/></svg></div><div style="left:0px;top:170px;width:800px;height:1px;background:#b8703a;"></div><div style="left:99px;top:171px;width:1px;height:19px;background:#b8703a;"></div><div class="t" style="left:1px;top:173px;width:98px;font-size:12px;line-height:16px;color:#111;letter-spacing:-0.06px;">P-Invoice</div><div style="left:209px;top:171px;width:1px;height:19px;background:#b8703a;"></div><div class="t" style="left:101px;top:173px;width:108px;font-size:12px;line-height:16px;color:#111;letter-spacing:0.4px;">422122</div><div style="left:314px;top:171px;width:1px;height:19px;background:#b8703a;"></div><div class="t" style="left:210px;top:173px;width:103.4px;text-align:right;font-size:12px;line-height:16px;color:#111;letter-spacing:0.2px;">01/24/2018</div><div style="left:419px;top:171px;width:1px;height:19px;background:#b8703a;"></div><div class="t" style="left:315px;top:173px;width:103.4px;text-align:right;font-size:12px;line-height:16px;color:#111;letter-spacing:0.2px;">01/24/2018</div><div style="left:489px;top:171px;width:1px;height:19px;background:#b8703a;"></div><div class="t" style="left:420px;top:173px;width:68.4px;text-align:right;font-size:12px;line-height:16px;color:#111;letter-spacing:0.2px;">01/24/2018</div><div style="left:569px;top:171px;width:1px;height:19px;background:#b8703a;"></div><div class="t" style="left:490px;top:173px;width:78.4px;text-align:right;font-size:12px;line-height:16px;color:#111;letter-spacing:0.2px;">100.00</div><div style="left:634px;top:171px;width:1px;height:19px;background:#b8703a;"></div><div class="t" style="left:570px;top:173px;width:63.4px;text-align:right;font-size:12px;line-height:16px;color:#111;letter-spacing:0.2px;">0.00</div><div style="left:679px;top:171px;width:1px;height:19px;background:#b8703a;"></div><div class="t" style="left:635px;top:173px;width:43.4px;text-align:right;font-size:12px;line-height:16px;color:#111;letter-spacing:0.2px;">2.50</div><div style="left:754px;top:171px;width:1px;height:19px;background:#b8703a;"></div><div class="t" style="left:680px;top:173px;width:73.4px;text-align:right;font-size:12px;line-height:16px;color:#111;letter-spacing:0.2px;">01/24/2018</div><div style="left:799px;top:171px;width:1px;height:19px;background:#b8703a;"></div><div style="left:771px;top:174px;width:12px;height:12px;"><svg width="12" height="12" viewBox="0 0 12 12" shape-rendering="crispEdges"><defs><linearGradient id="cg9" x1="0" y1="0" x2="1" y2="1"><stop offset="0.15" stop-color="#ffffff"/><stop offset="0.95" stop-color="#f0a672"/></linearGradient></defs><rect x="1" y="1" width="10" height="10" fill="url(#cg9)"/><rect x="0" y="0" width="12" height="1" fill="#6f8296"/><rect x="0" y="0" width="1" height="11" fill="#6f8296"/><rect x="11" y="1" width="1" height="11" fill="#6f8296"/><rect x="2" y="11" width="10" height="1" fill="#6f8296"/></svg></div><div style="left:0px;top:189px;width:800px;height:1px;background:#b8703a;"></div><div style="left:99px;top:190px;width:1px;height:19px;background:#b8703a;"></div><div class="t" style="left:1px;top:192px;width:98px;font-size:12px;line-height:16px;color:#111;letter-spacing:-0.06px;">P-Invoice</div><div style="left:209px;top:190px;width:1px;height:19px;background:#b8703a;"></div><div class="t" style="left:101px;top:192px;width:108px;font-size:12px;line-height:16px;color:#111;letter-spacing:0.4px;">422125</div><div style="left:314px;top:190px;width:1px;height:19px;background:#b8703a;"></div><div class="t" style="left:210px;top:192px;width:103.4px;text-align:right;font-size:12px;line-height:16px;color:#111;letter-spacing:0.2px;">01/25/2018</div><div style="left:419px;top:190px;width:1px;height:19px;background:#b8703a;"></div><div class="t" style="left:315px;top:192px;width:103.4px;text-align:right;font-size:12px;line-height:16px;color:#111;letter-spacing:0.2px;">01/25/2018</div><div style="left:489px;top:190px;width:1px;height:19px;background:#b8703a;"></div><div class="t" style="left:420px;top:192px;width:68.4px;text-align:right;font-size:12px;line-height:16px;color:#111;letter-spacing:0.2px;">01/25/2018</div><div style="left:569px;top:190px;width:1px;height:19px;background:#b8703a;"></div><div class="t" style="left:490px;top:192px;width:78.4px;text-align:right;font-size:12px;line-height:16px;color:#111;letter-spacing:0.2px;">100.00</div><div style="left:634px;top:190px;width:1px;height:19px;background:#b8703a;"></div><div class="t" style="left:570px;top:192px;width:63.4px;text-align:right;font-size:12px;line-height:16px;color:#111;letter-spacing:0.2px;">0.00</div><div style="left:679px;top:190px;width:1px;height:19px;background:#b8703a;"></div><div class="t" style="left:635px;top:192px;width:43.4px;text-align:right;font-size:12px;line-height:16px;color:#111;letter-spacing:0.2px;">2.50</div><div style="left:754px;top:190px;width:1px;height:19px;background:#b8703a;"></div><div class="t" style="left:680px;top:192px;width:73.4px;text-align:right;font-size:12px;line-height:16px;color:#111;letter-spacing:0.2px;">01/25/2018</div><div style="left:799px;top:190px;width:1px;height:19px;background:#b8703a;"></div><div style="left:771px;top:193px;width:12px;height:12px;"><svg width="12" height="12" viewBox="0 0 12 12" shape-rendering="crispEdges"><defs><linearGradient id="cg10" x1="0" y1="0" x2="1" y2="1"><stop offset="0.15" stop-color="#ffffff"/><stop offset="0.95" stop-color="#f0a672"/></linearGradient></defs><rect x="1" y="1" width="10" height="10" fill="url(#cg10)"/><rect x="0" y="0" width="12" height="1" fill="#6f8296"/><rect x="0" y="0" width="1" height="11" fill="#6f8296"/><rect x="11" y="1" width="1" height="11" fill="#6f8296"/><rect x="2" y="11" width="10" height="1" fill="#6f8296"/></svg></div><div style="left:0px;top:208px;width:800px;height:1px;background:#b8703a;"></div><div style="left:99px;top:209px;width:1px;height:19px;background:#b8703a;"></div><div class="t" style="left:1px;top:211px;width:98px;font-size:12px;line-height:16px;color:#111;letter-spacing:-0.06px;">P-Invoice</div><div style="left:209px;top:209px;width:1px;height:19px;background:#b8703a;"></div><div class="t" style="left:101px;top:211px;width:108px;font-size:12px;line-height:16px;color:#111;letter-spacing:0.4px;">422128</div><div style="left:314px;top:209px;width:1px;height:19px;background:#b8703a;"></div><div class="t" style="left:210px;top:211px;width:103.4px;text-align:right;font-size:12px;line-height:16px;color:#111;letter-spacing:0.2px;">01/26/2018</div><div style="left:419px;top:209px;width:1px;height:19px;background:#b8703a;"></div><div class="t" style="left:315px;top:211px;width:103.4px;text-align:right;font-size:12px;line-height:16px;color:#111;letter-spacing:0.2px;">01/26/2018</div><div style="left:489px;top:209px;width:1px;height:19px;background:#b8703a;"></div><div class="t" style="left:420px;top:211px;width:68.4px;text-align:right;font-size:12px;line-height:16px;color:#111;letter-spacing:0.2px;">01/26/2018</div><div style="left:569px;top:209px;width:1px;height:19px;background:#b8703a;"></div><div class="t" style="left:490px;top:211px;width:78.4px;text-align:right;font-size:12px;line-height:16px;color:#111;letter-spacing:0.2px;">100.00</div><div style="left:634px;top:209px;width:1px;height:19px;background:#b8703a;"></div><div class="t" style="left:570px;top:211px;width:63.4px;text-align:right;font-size:12px;line-height:16px;color:#111;letter-spacing:0.2px;">0.00</div><div style="left:679px;top:209px;width:1px;height:19px;background:#b8703a;"></div><div class="t" style="left:635px;top:211px;width:43.4px;text-align:right;font-size:12px;line-height:16px;color:#111;letter-spacing:0.2px;">2.50</div><div style="left:754px;top:209px;width:1px;height:19px;background:#b8703a;"></div><div class="t" style="left:680px;top:211px;width:73.4px;text-align:right;font-size:12px;line-height:16px;color:#111;letter-spacing:0.2px;">01/26/2018</div><div style="left:799px;top:209px;width:1px;height:19px;background:#b8703a;"></div><div style="left:771px;top:212px;width:12px;height:12px;"><svg width="12" height="12" viewBox="0 0 12 12" shape-rendering="crispEdges"><defs><linearGradient id="cg11" x1="0" y1="0" x2="1" y2="1"><stop offset="0.15" stop-color="#ffffff"/><stop offset="0.95" stop-color="#f0a672"/></linearGradient></defs><rect x="1" y="1" width="10" height="10" fill="url(#cg11)"/><rect x="0" y="0" width="12" height="1" fill="#6f8296"/><rect x="0" y="0" width="1" height="11" fill="#6f8296"/><rect x="11" y="1" width="1" height="11" fill="#6f8296"/><rect x="2" y="11" width="10" height="1" fill="#6f8296"/></svg></div><div style="left:0px;top:227px;width:800px;height:1px;background:#b8703a;"></div><div style="left:99px;top:228px;width:1px;height:19px;background:#b8703a;"></div><div class="t" style="left:1px;top:230px;width:98px;font-size:12px;line-height:16px;color:#111;letter-spacing:-0.06px;">P-Invoice</div><div style="left:209px;top:228px;width:1px;height:19px;background:#b8703a;"></div><div class="t" style="left:101px;top:230px;width:108px;font-size:12px;line-height:16px;color:#111;letter-spacing:0.4px;">422131</div><div style="left:314px;top:228px;width:1px;height:19px;background:#b8703a;"></div><div class="t" style="left:210px;top:230px;width:103.4px;text-align:right;font-size:12px;line-height:16px;color:#111;letter-spacing:0.2px;">01/27/2018</div><div style="left:419px;top:228px;width:1px;height:19px;background:#b8703a;"></div><div class="t" style="left:315px;top:230px;width:103.4px;text-align:right;font-size:12px;line-height:16px;color:#111;letter-spacing:0.2px;">01/27/2018</div><div style="left:489px;top:228px;width:1px;height:19px;background:#b8703a;"></div><div class="t" style="left:420px;top:230px;width:68.4px;text-align:right;font-size:12px;line-height:16px;color:#111;letter-spacing:0.2px;">01/27/2018</div><div style="left:569px;top:228px;width:1px;height:19px;background:#b8703a;"></div><div class="t" style="left:490px;top:230px;width:78.4px;text-align:right;font-size:12px;line-height:16px;color:#111;letter-spacing:0.2px;">100.00</div><div style="left:634px;top:228px;width:1px;height:19px;background:#b8703a;"></div><div class="t" style="left:570px;top:230px;width:63.4px;text-align:right;font-size:12px;line-height:16px;color:#111;letter-spacing:0.2px;">0.00</div><div style="left:679px;top:228px;width:1px;height:19px;background:#b8703a;"></div><div class="t" style="left:635px;top:230px;width:43.4px;text-align:right;font-size:12px;line-height:16px;color:#111;letter-spacing:0.2px;">2.50</div><div style="left:754px;top:228px;width:1px;height:19px;background:#b8703a;"></div><div class="t" style="left:680px;top:230px;width:73.4px;text-align:right;font-size:12px;line-height:16px;color:#111;letter-spacing:0.2px;">01/27/2018</div><div style="left:799px;top:228px;width:1px;height:19px;background:#b8703a;"></div><div style="left:771px;top:231px;width:12px;height:12px;"><svg width="12" height="12" viewBox="0 0 12 12" shape-rendering="crispEdges"><defs><linearGradient id="cg12" x1="0" y1="0" x2="1" y2="1"><stop offset="0.15" stop-color="#ffffff"/><stop offset="0.95" stop-color="#f0a672"/></linearGradient></defs><rect x="1" y="1" width="10" height="10" fill="url(#cg12)"/><rect x="0" y="0" width="12" height="1" fill="#6f8296"/><rect x="0" y="0" width="1" height="11" fill="#6f8296"/><rect x="11" y="1" width="1" height="11" fill="#6f8296"/><rect x="2" y="11" width="10" height="1" fill="#6f8296"/></svg></div><div style="left:0px;top:246px;width:800px;height:1px;background:#b8703a;"></div><div style="left:99px;top:247px;width:1px;height:19px;background:#b8703a;"></div><div class="t" style="left:1px;top:249px;width:98px;font-size:12px;line-height:16px;color:#111;letter-spacing:-0.06px;">P-Invoice</div><div style="left:209px;top:247px;width:1px;height:19px;background:#b8703a;"></div><div class="t" style="left:101px;top:249px;width:108px;font-size:12px;line-height:16px;color:#111;letter-spacing:0.4px;">422134</div><div style="left:314px;top:247px;width:1px;height:19px;background:#b8703a;"></div><div class="t" style="left:210px;top:249px;width:103.4px;text-align:right;font-size:12px;line-height:16px;color:#111;letter-spacing:0.2px;">01/28/2018</div><div style="left:419px;top:247px;width:1px;height:19px;background:#b8703a;"></div><div class="t" style="left:315px;top:249px;width:103.4px;text-align:right;font-size:12px;line-height:16px;color:#111;letter-spacing:0.2px;">01/28/2018</div><div style="left:489px;top:247px;width:1px;height:19px;background:#b8703a;"></div><div class="t" style="left:420px;top:249px;width:68.4px;text-align:right;font-size:12px;line-height:16px;color:#111;letter-spacing:0.2px;">01/28/2018</div><div style="left:569px;top:247px;width:1px;height:19px;background:#b8703a;"></div><div class="t" style="left:490px;top:249px;width:78.4px;text-align:right;font-size:12px;line-height:16px;color:#111;letter-spacing:0.2px;">100.00</div><div style="left:634px;top:247px;width:1px;height:19px;background:#b8703a;"></div><div class="t" style="left:570px;top:249px;width:63.4px;text-align:right;font-size:12px;line-height:16px;color:#111;letter-spacing:0.2px;">0.00</div><div style="left:679px;top:247px;width:1px;height:19px;background:#b8703a;"></div><div class="t" style="left:635px;top:249px;width:43.4px;text-align:right;font-size:12px;line-height:16px;color:#111;letter-spacing:0.2px;">2.50</div><div style="left:754px;top:247px;width:1px;height:19px;background:#b8703a;"></div><div class="t" style="left:680px;top:249px;width:73.4px;text-align:right;font-size:12px;line-height:16px;color:#111;letter-spacing:0.2px;">01/28/2018</div><div style="left:799px;top:247px;width:1px;height:19px;background:#b8703a;"></div><div style="left:771px;top:250px;width:12px;height:12px;"><svg width="12" height="12" viewBox="0 0 12 12" shape-rendering="crispEdges"><defs><linearGradient id="cg13" x1="0" y1="0" x2="1" y2="1"><stop offset="0.15" stop-color="#ffffff"/><stop offset="0.95" stop-color="#f0a672"/></linearGradient></defs><rect x="1" y="1" width="10" height="10" fill="url(#cg13)"/><rect x="0" y="0" width="12" height="1" fill="#6f8296"/><rect x="0" y="0" width="1" height="11" fill="#6f8296"/><rect x="11" y="1" width="1" height="11" fill="#6f8296"/><rect x="2" y="11" width="10" height="1" fill="#6f8296"/></svg></div><div style="left:0px;top:265px;width:800px;height:1px;background:#b8703a;"></div></div><div style="left:813px;top:176px;width:18px;height:259px;background:#ffffff;"></div><div style="left:814px;top:176px;width:16px;height:258px;background:#72879a;"></div><div style="left:815px;top:177px;width:14px;height:257px;background:#eeeeee;"></div><div style="left:815px;top:191px;width:1px;height:227px;background:#c9dbef;"></div><div style="left:815px;top:177px;width:14px;height:14px;background:#eeeeee;"></div><div style="left:815px;top:190px;width:14px;height:1px;background:#e4e4f4;"></div><svg style="position:absolute;left:818px;top:182px" width="9" height="5" viewBox="0 0 9 5"><path d="M0.5 4.6 H8.5 L4.5 0.2 Z" fill="#222"/></svg><div style="left:814px;top:191px;width:16px;height:77px;background:#f7b500;"></div><div style="left:815px;top:192px;width:14px;height:75px;background:linear-gradient(90deg,#f2c3a3,#e6936a);"></div><div style="left:818px;top:228px;width:9px;height:1px;background:#8d9bb2;"></div><div style="left:818px;top:230px;width:9px;height:1px;background:#8d9bb2;"></div><div style="left:818px;top:232px;width:9px;height:1px;background:#8d9bb2;"></div><div style="left:814px;top:418px;width:16px;height:16px;background:#72879a;"></div><div style="left:815px;top:419px;width:14px;height:14px;background:#eeeeee;"></div><div style="left:815px;top:419px;width:14px;height:1px;background:#ffffff;"></div><svg style="position:absolute;left:817px;top:424px" width="11" height="6" viewBox="0 0 11 6"><path d="M0.8 0.2 H10.2 L5.5 5 Z" fill="#2a2a2a"/></svg><div style="left:11px;top:440px;width:824px;height:39px;background:#a8a8a8;"></div><div style="left:11px;top:440px;width:823px;height:38px;background:#888888;"></div><div style="left:11px;top:440px;width:822px;height:37px;background:#c4c4c4;"></div><div style="left:12px;top:441px;width:821px;height:36px;background:#ffffff;"></div><div class="t" style="left:607px;top:451px;text-align:left;font-size:14px;line-height:16px;font-weight:bold;color:#222;letter-spacing:0.45px;">Order Total</div><div style="left:697px;top:446px;width:100px;height:24px;border:1px solid #7c7c7c;box-sizing:border-box;background:#eeeeee;"></div><div class="t" style="left:697px;top:451px;width:98px;text-align:right;font-size:14px;line-height:16px;font-weight:bold;color:#222;letter-spacing:0.3px;">4000.00</div>
</body></html>
